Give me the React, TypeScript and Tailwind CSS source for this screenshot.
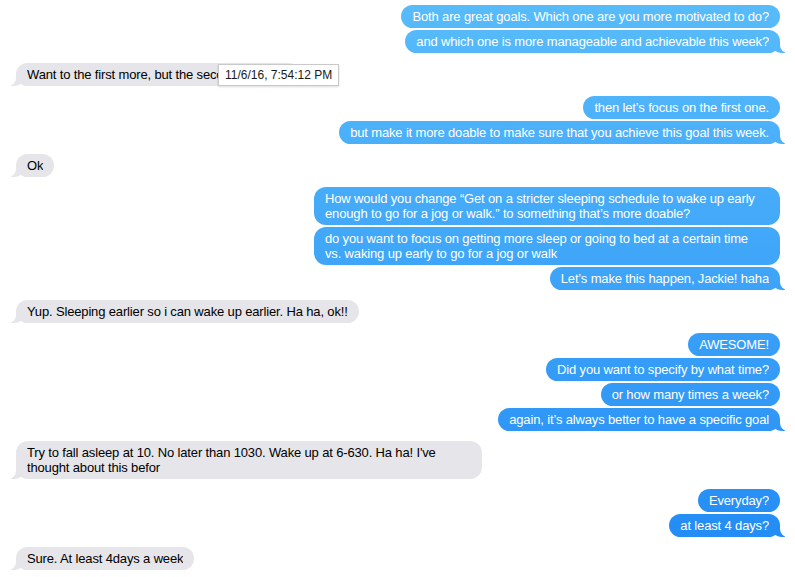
import type { ReactNode } from 'react';

type Msg = { text: ReactNode; w?: string };
type Group = { me: boolean; msgs: Msg[] };

const groups: Group[] = [
  {
    me: true,
    msgs: [
      { text: 'Both are great goals. Which one are you more motivated to do?' },
      { text: 'and which one is more manageable and achievable this week?' },
    ],
  },
  { me: false, msgs: [{ text: 'Want to the first more, but the second one is easier', w: 'w-[284px]' }] },
  {
    me: true,
    msgs: [
      { text: 'then let\u2019s focus on the first one.' },
      { text: 'but make it more doable to make sure that you achieve this goal this week.' },
    ],
  },
  { me: false, msgs: [{ text: 'Ok' }] },
  {
    me: true,
    msgs: [
      {
        text: (
          <>
            How would you change {'\u201c'}Get on a stricter sleeping schedule to wake up early
            <br />
            enough to go for a jog or walk.{'\u201d'} to something that{'\u2019'}s more doable?
          </>
        ),
        w: 'w-[466px]',
      },
      {
        text: (
          <>
            do you want to focus on getting more sleep or going to bed at a certain time
            <br />
            vs. waking up early to go for a jog or walk
          </>
        ),
        w: 'w-[466px]',
      },
      { text: 'Let\u2019s make this happen, Jackie! haha' },
    ],
  },
  { me: false, msgs: [{ text: 'Yup. Sleeping earlier so i can wake up earlier. Ha ha, ok!!' }] },
  {
    me: true,
    msgs: [
      { text: 'AWESOME!' },
      { text: 'Did you want to specify by what time?' },
      { text: 'or how many times a week?' },
      { text: 'again, it\u2019s always better to have a specific goal' },
    ],
  },
  {
    me: false,
    msgs: [
      {
        text: (
          <>
            Try to fall asleep at 10. No later than 1030. Wake up at 6-630. Ha ha! I've
            <br />
            thought about this befor
          </>
        ),
        w: 'w-[466px]',
      },
    ],
  },
  { me: true, msgs: [{ text: 'Everyday?' }, { text: 'at least 4 days?' }] },
  { me: false, msgs: [{ text: 'Sure. At least 4days a week' }] },
];

const blue = 'bg-fixed bg-linear-to-b from-[#58bcfa] to-[#1f89f5]';

function Bubble({ me, msg, tail, tip }: { me: boolean; msg: Msg; tail: boolean; tip?: boolean }) {
  return (
    <div
      className={`relative rounded-[12px] px-[11px] py-[4px] text-[13px] leading-[15px] tracking-[-0.15px] ${
        me ? `${blue} text-white` : 'bg-[#e5e5ea] text-black'
      } ${msg.w ?? ''}`}
    >
      {tail && me && (
        <>
          <span className={`absolute bottom-0 right-[-5px] h-[12px] w-[14px] rounded-bl-[11px] ${blue}`} />
          <span className="absolute bottom-0 right-[-9px] h-[13px] w-[9px] rounded-bl-[8px] bg-white" />
        </>
      )}
      {tail && !me && (
        <>
          <span className="absolute bottom-0 left-[-5px] h-[12px] w-[14px] rounded-br-[11px] bg-[#e5e5ea]" />
          <span className="absolute bottom-0 left-[-9px] h-[13px] w-[9px] rounded-br-[8px] bg-white" />
        </>
      )}
      <div className="relative overflow-hidden whitespace-nowrap">{msg.text}</div>
      {tip && (
        <div className="absolute left-[202px] top-[1px] z-10 flex h-[22px] items-center whitespace-nowrap border border-[#c9c9c9] bg-white px-[6px] text-[12px] tracking-normal text-[#1a1a1a] shadow-[0_1px_2px_rgba(0,0,0,0.15)]">
          11/6/16, 7:54:12 PM
        </div>
      )}
    </div>
  );
}

export default function App() {
  return (
    <div
      className="flex min-h-[577px] w-[795px] flex-col gap-[10px] bg-white pl-[16px] pr-[15px] pt-[5px]"
      style={{ fontFamily: '"Liberation Sans", Arial, sans-serif' }}
    >
      {groups.map((g, gi) => (
        <div key={gi} className={`flex flex-col gap-[2px] ${g.me ? 'items-end' : 'items-start'}`}>
          {g.msgs.map((m, mi) => (
            <Bubble key={mi} me={g.me} msg={m} tail={mi === g.msgs.length - 1} tip={gi === 1} />
          ))}
        </div>
      ))}
    </div>
  );
}
